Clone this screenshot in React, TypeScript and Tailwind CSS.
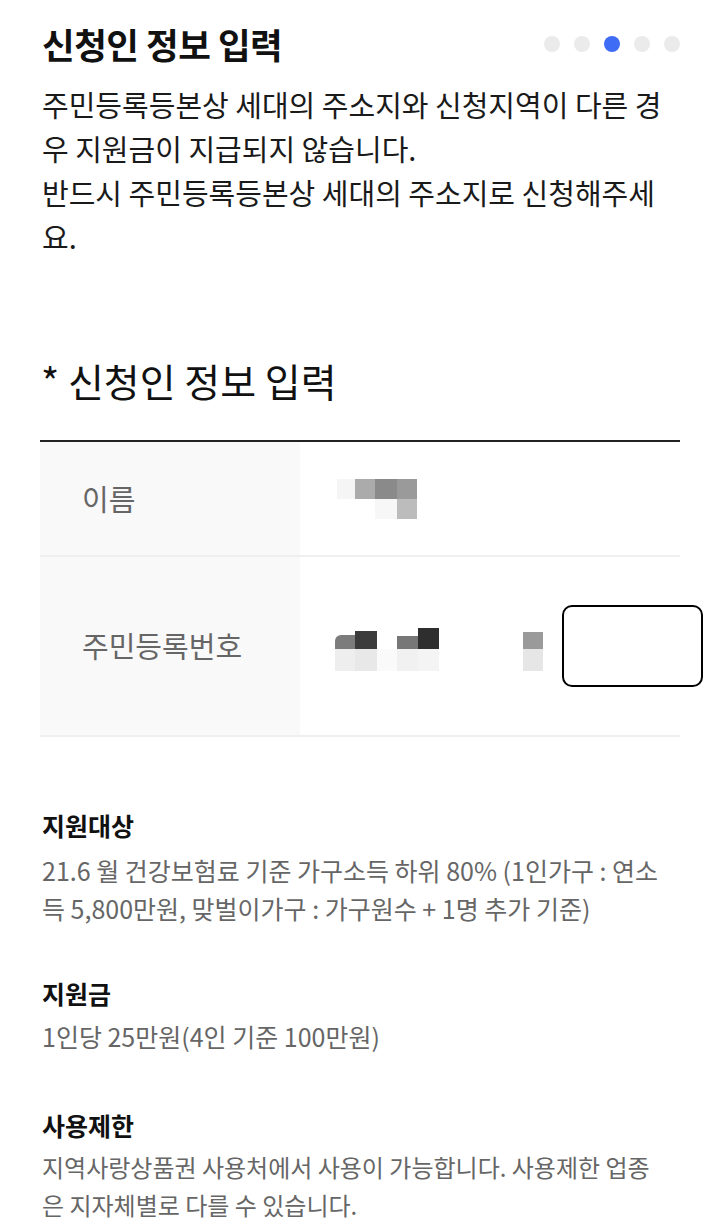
import React from "react";

export default function App() {
  return (
    <div className="w-[720px] h-[1232px] bg-white overflow-hidden px-[40px] font-[family-name:'Noto_Sans_CJK_KR','Noto_Sans',sans-serif] text-[#111]">
      {/* header */}
      <div className="flex items-center justify-between h-[52px] mt-[18px]">
        <h1 className="text-[35.5px] font-bold leading-none tracking-[-0.5px] pl-[2px]">신청인 정보 입력</h1>
        <div className="flex items-center gap-[14px]">
          <span className="w-4 h-4 rounded-full bg-[#ebebeb]" />
          <span className="w-4 h-4 rounded-full bg-[#ebebeb]" />
          <span className="w-4 h-4 rounded-full bg-[#3f6cf4]" />
          <span className="w-4 h-4 rounded-full bg-[#ebebeb]" />
          <span className="w-4 h-4 rounded-full bg-[#ebebeb]" />
        </div>
      </div>

      <p className="mt-[12px] text-[29px] leading-[44px] text-[#1a1a1a] pl-[2px] whitespace-nowrap">
        주민등록등본상 세대의 주소지와 신청지역이 다른 경<br />
        우 지원금이 지급되지 않습니다.<br />
        반드시 주민등록등본상 세대의 주소지로 신청해주세<br />
        요.
      </p>

      <h2 className="mt-[98px] text-[39px] leading-[48px] font-normal text-[#111] pl-[1px]">* 신청인 정보 입력</h2>

      {/* table */}
      <div className="mt-[36px] border-t-2 border-[#222]">
        <div className="flex h-[115px] border-b-2 border-[#efefef]">
          <div className="w-[260px] bg-[#f9f9f9] flex items-center pl-[42px] text-[29px] text-[#666]">이름</div>
          <div className="flex-1 flex items-center pl-[37px]">
            <div className="flex flex-col">
              <div className="flex">
                <div className="w-[18px] h-[20px] bg-[#f5f5f5]" />
                <div className="w-[20px] h-[20px] bg-[#ababab]" />
                <div className="w-[22px] h-[20px] bg-[#8a8a8a]" />
                <div className="w-[20px] h-[20px] bg-[#9a9a9a]" />
              </div>
              <div className="flex">
                <div className="w-[18px] h-[20px] bg-white" />
                <div className="w-[20px] h-[20px] bg-white" />
                <div className="w-[22px] h-[20px] bg-[#f7f7f7]" />
                <div className="w-[20px] h-[20px] bg-[#bcbcbc]" />
              </div>
            </div>
          </div>
        </div>
        <div className="relative flex h-[180px] border-b-2 border-[#efefef]">
          <div className="w-[260px] bg-[#f9f9f9] flex items-center pl-[42px] text-[29px] text-[#666]">주민등록번호</div>
          <div className="flex-1 flex items-center pl-[35px] pt-[8px]">
            <div className="flex flex-col">
              <div className="flex items-end h-[19px]">
                <div className="w-[20px] h-[14px] bg-[#7c7c7c] rounded-tl-[6px]" />
                <div className="w-[22px] h-[18px] bg-[#3b3b3b]" />
              </div>
              <div className="flex">
                <div className="w-[20px] h-[22px] bg-[#eeeeee]" />
                <div className="w-[22px] h-[22px] bg-[#e8e8e8]" />
              </div>
            </div>
            <div className="flex flex-col">
              <div className="flex items-end h-[19px]">
                <div className="w-[20px] h-[19px] bg-white" />
              </div>
              <div className="flex">
                <div className="w-[20px] h-[22px] bg-[#fafafa]" />
              </div>
            </div>
            <div className="flex flex-col">
              <div className="flex items-end h-[21px] -mt-[2px]">
                <div className="w-[21px] h-[13px] bg-[#777777]" />
                <div className="w-[21px] h-[21px] bg-[#2e2e2e]" />
              </div>
              <div className="flex">
                <div className="w-[21px] h-[22px] bg-[#f1f1f1]" />
                <div className="w-[21px] h-[22px] bg-[#f4f4f4]" />
              </div>
            </div>
            <div className="flex flex-col ml-[84px]">
              <div className="flex items-end h-[19px]">
                <div className="w-[20px] h-[17px] bg-[#9a9a9a]" />
              </div>
              <div className="flex">
                <div className="w-[20px] h-[22px] bg-[#e6e6e6]" />
              </div>
            </div>
          </div>
          <div className="absolute left-[522px] top-[48px] w-[141px] h-[82px] border-2 border-black rounded-[10px] bg-white" />
        </div>
      </div>

      {/* sections */}
      <h3 className="mt-[69px] text-[25px] font-bold leading-[38px] pl-[2px]">지원대상</h3>
      <p className="mt-[7px] text-[25px] leading-[38px] text-[#666] pl-[2px] whitespace-nowrap">
        21.6 월 건강보험료 기준 가구소득 하위 80% (1인가구 : 연소<br />
        득 5,800만원, 맞벌이가구 : 가구원수 + 1명 추가 기준)
      </p>

      <h3 className="mt-[47px] text-[25px] font-bold leading-[38px] pl-[2px]">지원금</h3>
      <p className="mt-[5px] text-[25px] leading-[38px] text-[#666] pl-[2px]">1인당 25만원(4인 기준 100만원)</p>

      <h3 className="mt-[51px] text-[25px] font-bold leading-[38px] pl-[2px]">사용제한</h3>
      <p className="mt-[4px] text-[24px] leading-[38px] text-[#666] pl-[2px] whitespace-nowrap">
        지역사랑상품권 사용처에서 사용이 가능합니다. 사용제한 업종<br />
        은 지자체별로 다를 수 있습니다.
      </p>
    </div>
  );
}
